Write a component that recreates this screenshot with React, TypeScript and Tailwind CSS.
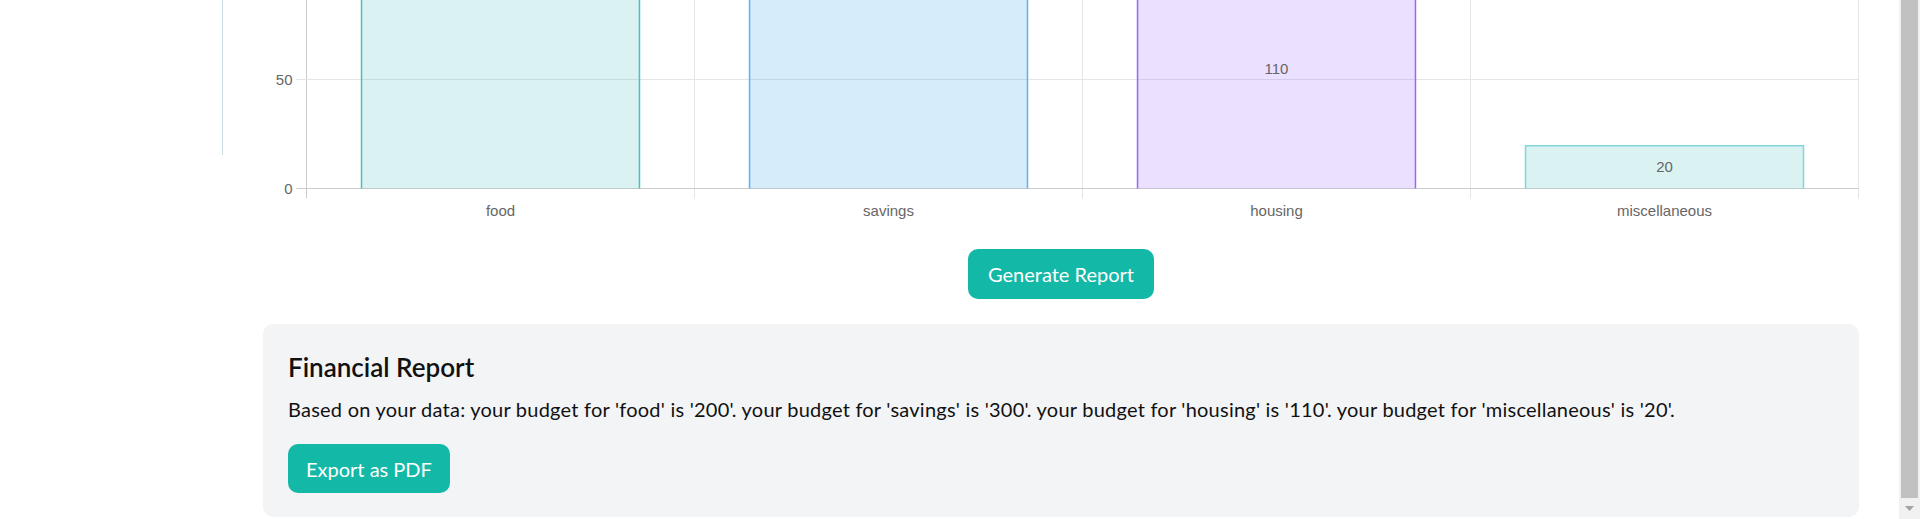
import React from 'react';

type Budget = {
    label: string;
    amount: number;
    fill: string;
    border: string;
};

const budgets: Budget[] = [
    { label: 'food', amount: 200, fill: 'rgba(75, 192, 192, 0.2)', border: '#4bc0c0' },
    { label: 'savings', amount: 300, fill: 'rgba(54, 162, 235, 0.2)', border: '#5cb3ee' },
    { label: 'housing', amount: 110, fill: 'rgba(153, 102, 255, 0.2)', border: '#9966ff' },
    { label: 'miscellaneous', amount: 20, fill: 'rgba(75, 192, 192, 0.2)', border: '#84d6db' },
];

// chart geometry, in px inside the canvas
const AXIS_X = 43.5;
const STEP = 388;
const BAR_W = 279.4;
const ZERO_Y = 188.5;
const PX_PER_UNIT = 2.18;
const RIGHT_X = AXIS_X + STEP * budgets.length;
const TICK_FONT = '"Liberation Sans", Arial, sans-serif';

function BudgetChart() {
    const yTicks = [0, 50];

    return (
        <svg width="100%" height="224" className="block overflow-hidden">
            {/* vertical grid lines, first one doubles as the y axis */}
            {budgets.concat(budgets[0]).map((_, i) => (
                <line
                    key={`vx-${i}`}
                    x1={AXIS_X + i * STEP}
                    x2={AXIS_X + i * STEP}
                    y1={0}
                    y2={198.5}
                    stroke={i === 0 ? '#cccccc' : '#e5e5e5'}
                    strokeWidth={1}
                />
            ))}

            {yTicks.map((t) => {
                const y = ZERO_Y - t * PX_PER_UNIT;
                return (
                    <g key={t}>
                        <line
                            x1={AXIS_X - 10}
                            x2={RIGHT_X}
                            y1={y}
                            y2={y}
                            stroke={t === 0 ? '#cccccc' : '#e5e5e5'}
                            strokeWidth={1}
                        />
                        <text
                            x={29.5}
                            y={y + 5.4}
                            textAnchor="end"
                            fontSize={15}
                            fill="#666666"
                            fontFamily={TICK_FONT}
                        >
                            {t}
                        </text>
                    </g>
                );
            })}

            {budgets.map((b, i) => {
                const left = AXIS_X + i * STEP + (STEP - BAR_W) / 2;
                const top = ZERO_Y - b.amount * PX_PER_UNIT;
                const h = ZERO_Y - top;
                const cx = left + BAR_W / 2;
                const labelY = top + h / 2 + 5.4;
                return (
                    <g key={b.label}>
                        <rect x={left} y={top} width={BAR_W} height={h} fill={b.fill} />
                        <path
                            d={`M${left + 0.75} ${ZERO_Y} V${top + 0.75} H${left + BAR_W - 0.75} V${ZERO_Y}`}
                            fill="none"
                            stroke={b.border}
                            strokeWidth={1.5}
                        />
                        {/* value labels sit at the bar's middle; skip the ones scrolled out of view */}
                        {labelY > 12 && (
                            <text
                                x={cx}
                                y={labelY}
                                textAnchor="middle"
                                fontSize={15}
                                fill="#666666"
                                fontFamily={TICK_FONT}
                            >
                                {b.amount}
                            </text>
                        )}
                        <text
                            x={AXIS_X + i * STEP + STEP / 2}
                            y={215.5}
                            textAnchor="middle"
                            fontSize={15}
                            fill="#666666"
                            fontFamily={TICK_FONT}
                        >
                            {b.label}
                        </text>
                    </g>
                );
            })}
        </svg>
    );
}

export default function App() {
    const summary = budgets
        .map((b) => `your budget for '${b.label}' is '${b.amount}'.`)
        .join(' ');

    return (
        <div
            className="flex h-[519px] overflow-hidden bg-white text-[#111111]"
            style={{ fontFamily: 'Lato, "Open Sans", sans-serif' }}
        >
            <aside className="w-[223px] shrink-0">
                <div className="h-[155px] border-r border-[#c8dbe2]" />
            </aside>

            <main className="min-w-0 flex-1 px-10">
                <BudgetChart />

                <div className="mt-[25px] flex justify-center">
                    <button className="h-[50px] rounded-[10px] bg-[#14b8a6] px-5 text-[20px] text-white hover:bg-[#0d9488]">
                        Generate Report
                    </button>
                </div>

                <section className="mt-[25px] rounded-[10px] bg-[#f3f4f6] px-[25px] pt-[25px] pb-6">
                    <h2 className="text-[26px] leading-[36px] font-semibold">Financial Report</h2>
                    <p className="mt-[9px] text-[20px] leading-[30px] tracking-[0.23px]">
                        Based on your data: {summary}
                    </p>
                    <button className="mt-5 h-[49px] rounded-[10px] bg-[#14b8a6] px-[18px] text-[20px] text-white hover:bg-[#0d9488]">
                        Export as PDF
                    </button>
                </section>
            </main>

            {/* page scrollbar, scrolled to the bottom */}
            <div className="flex w-[21px] shrink-0 flex-col bg-[#f1f1f1]">
                <div className="mx-[2px] h-[498px] bg-[#c1c1c1]" />
                <div className="flex flex-1 items-center justify-center">
                    <svg width="9" height="6" viewBox="0 0 9 6">
                        <path d="M0 0 H9 L4.5 5 Z" fill="#a3a3a3" />
                    </svg>
                </div>
            </div>
        </div>
    );
}
